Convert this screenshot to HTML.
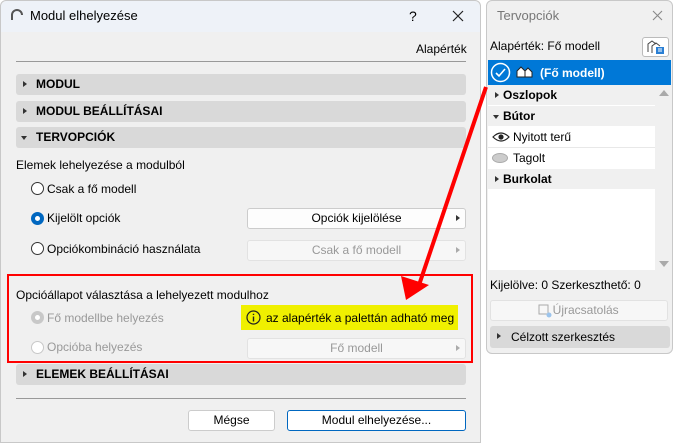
<!DOCTYPE html>
<html><head><meta charset="utf-8"><style>
*{margin:0;padding:0;box-sizing:border-box}
body{width:673px;height:443px;background:#fff;font-family:"Liberation Sans",sans-serif;font-size:12px;color:#000;position:relative;overflow:hidden}
.a{position:absolute;white-space:nowrap}
.bar{position:absolute;left:16px;width:450px;height:21px;background:#d9d9d9;border-radius:3px;font-weight:bold;font-size:12px;line-height:21px;padding-left:20px}
.bar:before{content:"";position:absolute;left:7px;top:7px;border-left:4px solid #333;border-top:3.5px solid transparent;border-bottom:3.5px solid transparent}
.bar.open:before{left:5px;top:9px;border-top:4px solid #333;border-left:3.5px solid transparent;border-right:3.5px solid transparent;border-bottom:0}
.rad{position:absolute;width:13px;height:13px;border:1px solid #333;border-radius:50%;background:#fff}
.btn{position:absolute;height:21px;background:#fdfdfd;border:1px solid #ccc;border-radius:3px;text-align:center;line-height:19px}
.btn.dis{color:#999;background:#f7f7f7;border-color:#e2e2e2}
.btn .ar{position:absolute;right:5px;top:6px;border-left:4px solid #333;border-top:3.5px solid transparent;border-bottom:3.5px solid transparent}
.btn.dis .ar{border-left-color:#aaa}
</style></head><body>
<!-- dialog -->
<div class="a" style="left:0;top:0;width:481px;height:443px;background:#f0f0f0;border:1px solid #c8c8c8;border-radius:6px 6px 0 0"></div>
<div class="a" style="left:1px;top:1px;width:479px;height:31px;background:#eef2f8;border-radius:6px 6px 0 0"></div>
<svg class="a" style="left:10px;top:9px" width="14" height="12"><path d="M2 11 V6 A5 5 0 0 1 12 6" fill="none" stroke="#555" stroke-width="2"/></svg>
<div class="a" style="left:30px;top:8px;font-size:13px">Modul elhelyezése</div>
<div class="a" style="left:409px;top:8px;font-size:14px">?</div>
<svg class="a" style="left:452px;top:10px" width="12" height="12"><path d="M1 1L11 11M11 1L1 11" stroke="#222" stroke-width="1.2"/></svg>
<div class="a" style="left:416px;top:42px">Alapérték</div>
<div class="a" style="left:16px;top:61px;width:450px;height:1px;background:#999"></div>
<div class="bar" style="top:74px">MODUL</div>
<div class="bar" style="top:101px">MODUL BEÁLLÍTÁSAI</div>
<div class="bar open" style="top:127px">TERVOPCIÓK</div>
<div class="a" style="left:16px;top:158px">Elemek lehelyezése a modulból</div>
<div class="rad" style="left:31px;top:182px"></div><div class="a" style="left:47px;top:182px">Csak a fő modell</div>
<div class="rad" style="left:31px;top:212px;border:4px solid #0067c0"></div><div class="a" style="left:47px;top:211px">Kijelölt opciók</div>
<div class="btn" style="left:247px;top:208px;width:219px">Opciók kijelölése<span class="ar"></span></div>
<div class="rad" style="left:31px;top:242px"></div><div class="a" style="left:47px;top:242px">Opciókombináció használata</div>
<div class="btn dis" style="left:247px;top:240px;width:219px">Csak a fő modell<span class="ar"></span></div>
<div class="a" style="left:7px;top:274px;width:466px;height:89px;border:2px solid #f00"></div>
<div class="a" style="left:16px;top:288px">Opcióállapot választása a lehelyezett modulhoz</div>
<div class="rad" style="left:31px;top:311px;border:4px solid #c8c8c8"></div><div class="a" style="left:47px;top:311px;color:#999">Fő modellbe helyezés</div>
<div class="a" style="left:241px;top:305px;width:217px;height:25px;background:#f0f000"></div>
<svg class="a" style="left:246px;top:310px" width="15" height="15"><circle cx="7.5" cy="7.5" r="6.5" fill="none" stroke="#222" stroke-width="1.2"/><path d="M7.5 6.5V11.5M7.5 3.8V5" stroke="#222" stroke-width="1.4"/></svg>
<div class="a" style="left:266px;top:311px">az alapérték a palettán adható meg</div>
<div class="rad" style="left:31px;top:341px;border-color:#c8c8c8"></div><div class="a" style="left:47px;top:340px;color:#999">Opcióba helyezés</div>
<div class="btn dis" style="left:247px;top:338px;width:219px">Fő modell<span class="ar"></span></div>
<div class="bar" style="top:364px">ELEMEK BEÁLLÍTÁSAI</div>
<div class="a" style="left:16px;top:398px;width:450px;height:1px;background:#999"></div>
<div class="btn" style="left:188px;top:410px;width:87px;background:#fff">Mégse</div>
<div class="btn" style="left:287px;top:410px;width:179px;background:#fff;border-color:#0067c0">Modul elhelyezése...</div>
<!-- palette -->
<div class="a" style="left:486px;top:0;width:187px;height:354px;background:#f0f0f0;border:1px solid #c8c8c8;border-radius:6px"></div>
<div class="a" style="left:497px;top:8px;font-size:13px;color:#777">Tervopciók</div>
<svg class="a" style="left:652px;top:10px" width="11" height="11"><path d="M1 1L10 10M10 1L1 10" stroke="#888" stroke-width="1.1"/></svg>
<div class="a" style="left:490px;top:39px">Alapérték: Fő modell</div>
<div class="a" style="left:642px;top:37px;width:27px;height:20px;background:#fff;border:1px solid #bbb;border-radius:3px"></div>
<svg class="a" style="left:646px;top:38px" width="20" height="18"><path d="M2 14V6l4-3 4 3M6 15V8l4-3 4 3" fill="none" stroke="#444" stroke-width="1"/><rect x="10" y="9" width="8" height="7" fill="#2a7fd4"/><path d="M12 11h4M12 13h4" stroke="#fff"/></svg>
<div class="a" style="left:488px;top:60px;width:183px;height:25px;background:#0078d7"></div>
<svg class="a" style="left:490px;top:62px" width="21" height="21"><circle cx="10.5" cy="10.5" r="9" fill="none" stroke="#fff" stroke-width="1.5"/><path d="M6 11l3 3 6-7" fill="none" stroke="#fff" stroke-width="1.6"/></svg>
<svg class="a" style="left:516px;top:66px" width="17" height="12"><path d="M1 11V5l4-4 4 4v6zM9 5l3-3 4 4v5H9" fill="#fff" stroke="#222" stroke-width="1"/></svg>
<div class="a" style="left:540px;top:66px;color:#fff;font-weight:bold">(Fő modell)</div>
<div class="a" style="left:488px;top:85px;width:167px;height:185px;background:#fff"></div>
<div class="a" style="left:655px;top:85px;width:16px;height:185px;background:#f0f0f0"></div>
<div class="a" style="left:659px;top:90px;border-bottom:6px solid #aaa;border-left:5px solid transparent;border-right:5px solid transparent"></div>
<div class="a" style="left:659px;top:261px;border-top:6px solid #aaa;border-left:5px solid transparent;border-right:5px solid transparent"></div>
<div class="bar" style="left:488px;top:85px;width:167px;background:#f0f0f0;border-radius:0;height:20px;line-height:20px;font-size:12px;padding-left:15px">Oszlopok</div>
<div class="bar open" style="left:488px;top:106px;width:167px;background:#f0f0f0;border-radius:0;height:20px;line-height:20px;font-size:12px;padding-left:15px">Bútor</div>
<svg class="a" style="left:492px;top:131px" width="18" height="12"><path d="M1 6Q9 -2 17 6Q9 14 1 6Z" fill="none" stroke="#222" stroke-width="1.2"/><circle cx="9" cy="6" r="2.6" fill="#222"/></svg>
<div class="a" style="left:513px;top:130px">Nyitott terű</div>
<div class="a" style="left:488px;top:147px;width:167px;height:1px;background:#e8e8e8"></div>
<div class="a" style="left:492px;top:153px;width:16px;height:10px;border-radius:50%;background:#ccc;border:1px solid #aaa"></div>
<div class="a" style="left:513px;top:151px">Tagolt</div>
<div class="bar" style="left:488px;top:169px;width:167px;background:#f0f0f0;border-radius:0;height:20px;line-height:20px;font-size:12px;padding-left:15px">Burkolat</div>
<div class="a" style="left:490px;top:278px">Kijelölve: 0 Szerkeszthető: 0</div>
<div class="btn dis" style="left:490px;top:300px;width:178px;height:21px">&nbsp;&nbsp;&nbsp;&nbsp;Újracsatolás</div>
<svg class="a" style="left:537px;top:303px" width="16" height="15"><rect x="2" y="2" width="9" height="9" fill="none" stroke="#aaa"/><circle cx="12" cy="12" r="2.5" fill="#9cc4ec"/></svg>
<div class="bar" style="left:490px;top:326px;width:180px;height:22px;line-height:22px;font-weight:normal;padding-left:21px">Célzott szerkesztés</div>
<!-- arrow -->
<svg class="a" style="left:0;top:0" width="673" height="443"><path d="M486 87L418 288" stroke="#f00" stroke-width="4"/><path d="M406 300L401 276L429 285Z" fill="#f00"/></svg>
</body></html>
